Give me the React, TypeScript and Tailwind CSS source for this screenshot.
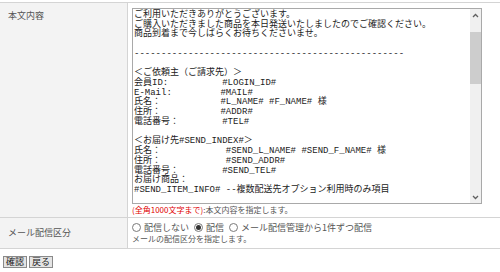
import { useState } from "react";

const body = [
  "ご利用いただきありがとうございます。",
  "ご購入いただきました商品を本日発送いたしましたのでご確認ください。",
  "商品到着まで今しばらくお待ちくださいませ。",
  "",
  "--------------------------------------------------",
  "",
  "＜ご依頼主（ご請求先）＞",
  "会員ID:          #LOGIN_ID#",
  "E-Mail:         #MAIL#",
  "氏名：           #L_NAME# #F_NAME# 様",
  "住所：           #ADDR#",
  "電話番号：        #TEL#",
  "",
  "＜お届け先#SEND_INDEX#＞",
  "氏名：            #SEND_L_NAME# #SEND_F_NAME# 様",
  "住所：            #SEND_ADDR#",
  "電話番号：        #SEND_TEL#",
  "お届け商品：",
  "#SEND_ITEM_INFO# --複数配送先オプション利用時のみ項目",
].join("\n");

const options = ["配信しない", "配信", "メール配信管理から1件ずつ配信"];

const Chevron = ({ up }: { up?: boolean }) => (
  <svg width="7" height="5" viewBox="0 0 7 5" className="text-[#606060]">
    <path
      d={up ? "M1 4 L3.5 1.5 L6 4" : "M1 1 L3.5 3.5 L6 1"}
      fill="none"
      stroke="currentColor"
      strokeWidth="1.3"
    />
  </svg>
);

export default function App() {
  const [mode, setMode] = useState(1);

  return (
    <div className="h-[272px] w-[500px] overflow-hidden bg-white pt-[2px] font-['Noto_Sans_CJK_JP',sans-serif] text-[9px] text-[#333]">
      <div className="grid grid-cols-[128px_1fr] border-y border-[#d4d4d4]">
        <div className="border-r border-[#d4d4d4] bg-[#f3f3f3] px-[8px] pt-[6px] text-[#555]">本文内容</div>
        <div className="px-[4px] pb-[2px] pt-[5px]">
          <div className="flex h-[196px] w-[350px] border border-[#a9a9a9] bg-white">
            <textarea
              readOnly
              defaultValue={body}
              className="h-full flex-1 resize-none overflow-hidden whitespace-pre bg-white pb-0 pl-px pr-0 pt-[2px] font-['Liberation_Mono','Noto_Sans_CJK_JP',monospace] text-[9px] leading-[9.72px] text-[#222] outline-none"
            />
            <div className="flex w-[11px] flex-col bg-[#f0f0f0]">
              <div className="flex h-[12px] items-center justify-center">
                <Chevron up />
              </div>
              <div className="mx-auto mt-[11px] h-[52px] w-full bg-[#cdcdcd]" />
              <div className="flex-1" />
              <div className="flex h-[12px] items-center justify-center">
                <Chevron />
              </div>
            </div>
          </div>
          <p className="text-[8px] leading-[11px] text-[#555]">
            <span className="text-[#e00000]">(全角1000文字まで)</span>:本文内容を指定します。
          </p>
        </div>

        <div className="flex items-center border-r border-t border-[#d4d4d4] bg-[#f3f3f3] px-[8px] text-[#555]">
          メール配信区分
        </div>
        <div className="border-t border-[#d4d4d4] px-[4px] pb-[4px] pt-[4px] text-[#555]">
          <div className="flex items-center gap-[5px] leading-[11px]">
            {options.map((o, i) => (
              <label key={o} className="flex cursor-pointer items-center gap-[3px]" onClick={() => setMode(i)}>
                <span className="flex h-[9px] w-[9px] items-center justify-center rounded-full border border-[#7a7a7a] bg-white">
                  {mode === i && <span className="h-[5px] w-[5px] rounded-full bg-[#333]" />}
                </span>
                {o}
              </label>
            ))}
          </div>
          <p className="text-[8px] leading-[11px]">メールの配信区分を指定します。</p>
        </div>
      </div>

      <div className="flex gap-[2px] px-[3px] pt-[7px]">
        <button
          type="button"
          className="h-[12px] border border-[#8a8a8a] bg-[#e4e4e4] px-[2px] text-[9px] leading-[10px] text-[#222]"
        >
          確認
        </button>
        <button
          type="button"
          className="h-[12px] border border-[#8a8a8a] bg-[#e4e4e4] px-[2px] text-[9px] leading-[10px] text-[#222]"
        >
          戻る
        </button>
      </div>
    </div>
  );
}
